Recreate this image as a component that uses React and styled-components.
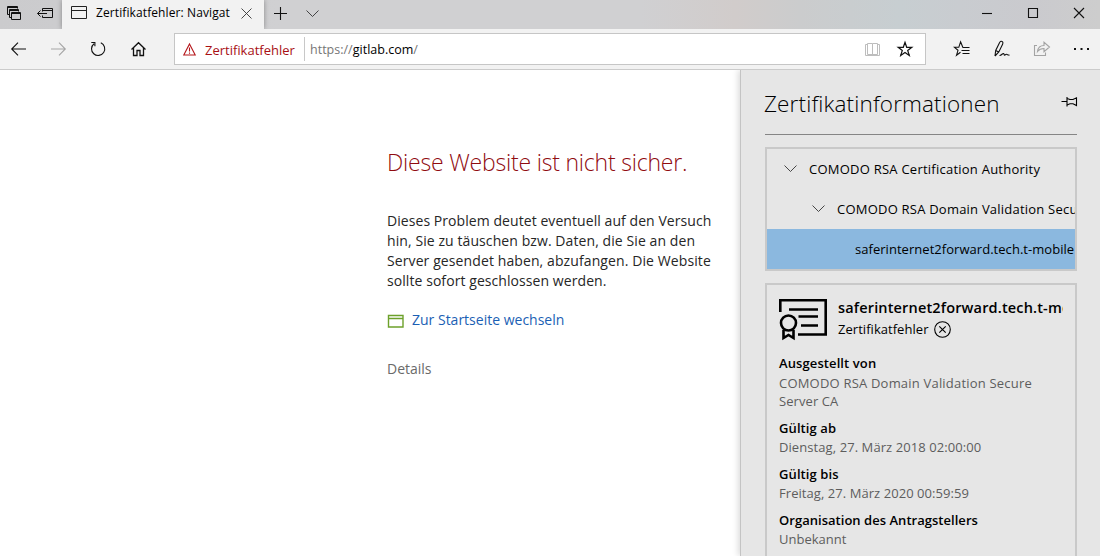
import React from "react";
import styled, { createGlobalStyle } from "styled-components";

const Global = createGlobalStyle`
  * { box-sizing: border-box; }
  html, body { margin: 0; height: 100%; overflow: hidden; }
  body { font-family: "Open Sans", "Noto Sans", sans-serif; font-size: 13px; color: #000; background: #fff; }
  h1, h2, p, dl, dt, dd { margin: 0; font-weight: 400; }
`;

const Window = styled.div`
  display: flex;
  flex-direction: column;
  width: 1100px;
  height: 556px;
  overflow: hidden;
`;

const TitleBar = styled.header`
  display: flex;
  height: 29px;
  background: linear-gradient(90deg, #cbcbcd 0, #d0d0d2 280px, #d0d0d2 640px, #d1cccb 735px, #cbcccd 800px, #c7ced1 900px, #c9ccd0 960px, #cacace 1030px, #cdcdcd 1100px);
`;

const Slot = styled.span`
  display: flex;
  flex: none;
  align-items: center;
  justify-content: center;
  width: ${(p) => p.$w}px;
  height: 100%;
  padding-bottom: ${(p) => p.$lift || 0}px;
  padding-left: ${(p) => p.$shift || 0}px;
  color: ${(p) => p.$color || "#111"};
`;

const Spacer = styled.span`
  flex: 1;
`;

const Icon = styled.svg`
  display: block;
  flex: none;
  margin-top: ${(p) => p.$top || 0}px;
  overflow: visible;
  fill: none;
  stroke: currentColor;
  stroke-width: ${(p) => p.$stroke || 1.1};
`;

const Tab = styled.div`
  display: flex;
  align-items: center;
  flex: none;
  width: 202px;
  padding: 0 12px 3px 9px;
  background: #f2f2f2;
  box-shadow: 0 0 5px rgba(0, 0, 0, 0.35);
  clip-path: inset(0 -6px 0 -6px);
`;

const TabTitle = styled.span`
  width: 145px;
  margin-left: 9px;
  font-size: 12px;
  line-height: 20px;
  letter-spacing: ${(p) => p.$ls}px;
  white-space: nowrap;
`;

const Toolbar = styled.nav`
  display: flex;
  align-items: center;
  flex: none;
  height: 41px;
  background: #f2f2f2;
  border-bottom: 1px solid #cbcbcb;
`;

const AddressBar = styled.div`
  display: flex;
  align-items: center;
  width: 752px;
  height: 32px;
  margin: 0 16px 0 15px;
  padding: 0 4px 0 8px;
  background: #fff;
  border: 1px solid #c6c6c6;
`;

const CertWarning = styled.span`
  width: 99px;
  margin-left: 9px;
  color: #a80f14;
  font-size: 13px;
  line-height: 20px;
  padding-top: 2px;
  letter-spacing: ${(p) => p.$ls}px;
  white-space: nowrap;
`;

const Divider = styled.span`
  width: 1px;
  height: 24px;
  margin-right: 5px;
  background: #c8c8c8;
`;

const Url = styled.span`
  color: #767676;
  font-size: 12.5px;
  line-height: 22px;
  padding-top: 1px;
  letter-spacing: ${(p) => p.$ls}px;
  b { color: #000; font-weight: 400; }
`;

const Content = styled.div`
  display: flex;
  flex: 1;
  min-height: 0;
`;

const Page = styled.main`
  flex: 1;
  padding: 76px 0 0 387px;
  white-space: nowrap;
`;

const Heading = styled.h1`
  && { font-weight: 340; }
  color: #900b10;
  font-size: 23px;
  line-height: 32px;
  letter-spacing: ${(p) => p.$ls}px;
`;

const Message = styled.p`
  margin-top: 33px;
  color: #262626;
  font-size: 14px;
  line-height: 20px;
`;

const Line = styled.span`
  display: block;
  letter-spacing: ${(p) => p.$ls}px;
`;

const HomeLink = styled.div`
  display: flex;
  align-items: center;
  gap: 8px;
  height: 20px;
  margin-top: 19px;
  color: #1b5fb4;
  font-size: 14px;
  line-height: 20px;
`;

const Details = styled.div`
  margin-top: 29px;
  color: #6a6a6a;
  font-size: 14px;
  line-height: 20px;
`;

const Panel = styled.aside`
  flex: none;
  width: 360px;
  padding: 0 23px 0 24px;
  background: #e6e6e6;
  border-left: 1px solid #c4c4c4;
  box-shadow: -2px 0 6px rgba(0, 0, 0, 0.14);
  clip-path: inset(0 0 0 -10px);
`;

const PanelHeader = styled.div`
  display: flex;
  justify-content: space-between;
  height: 65px;
  padding-top: 18px;
  border-bottom: 1px solid #858585;
`;

const PanelTitle = styled.h2`
  && { font-weight: 340; }
  margin-left: -1px;
  font-size: 22.5px;
  line-height: 32px;
  letter-spacing: ${(p) => p.$ls}px;
`;

const Tree = styled.div`
  height: 124px;
  margin-top: 12px;
  border: 2px solid #c9c9c9;
`;

const TreeRow = styled.div`
  display: flex;
  align-items: center;
  gap: 12px;
  height: 40px;
  padding-left: ${(p) => p.$indent}px;
  overflow: hidden;
  background: ${(p) => (p.$selected ? "#8bb8df" : "transparent")};
  font-size: 13px;
  white-space: nowrap;
  letter-spacing: ${(p) => p.$ls}px;
`;

const Card = styled.section`
  height: 300px;
  margin-top: 12px;
  padding: 13px 12px 0 12px;
  border: 2px solid #c9c9c9;
`;

const CardHead = styled.div`
  display: flex;
  gap: 10px;
  height: 55px;
`;

const CardText = styled.div`
  flex: 1;
  min-width: 0;
  white-space: nowrap;
`;

const Subject = styled.div`
  overflow: hidden;
  font-size: 14.5px;
  font-weight: 600;
  line-height: 20px;
  letter-spacing: ${(p) => p.$ls}px;
`;

const Status = styled.div`
  display: flex;
  align-items: center;
  gap: 5px;
  height: 22px;
  font-size: 13px;
  letter-spacing: ${(p) => p.$ls}px;
`;

const Field = styled.dl`
  margin-bottom: 8px;
  white-space: nowrap;

  &:first-of-type dt { line-height: 21px; }
`;

const Label = styled.dt`
  && { font-weight: 600; }
  font-size: 13px;
  line-height: 20px;
  letter-spacing: ${(p) => p.$ls}px;
`;

const Value = styled.dd`
  color: #5d5d5d;
  font-size: 13px;
  line-height: 18px;
  letter-spacing: ${(p) => p.$ls}px;
`;

const Chevron = () => (
  <Icon width="13" height="8" viewBox="0 0 13 8" color="#333" $stroke={0.9}><path d="M.5 .5 6.500 6.500 12.500 .5" /></Icon>
);

const fields = [
  { label: "Ausgestellt von", ls: 0.1, values: [["COMODO RSA Domain Validation Secure", 0.2], ["Server CA", 0.08]] },
  { label: "Gültig ab", ls: 0.1, values: [["Dienstag, 27. März 2018 02:00:00", 0.08]] },
  { label: "Gültig bis", ls: 0.1, values: [["Freitag, 27. März 2020 00:59:59", 0.06]] },
  { label: "Organisation des Antragstellers", ls: 0.03, values: [["Unbekannt", 0]] },
];

export default function App() {
  return (
    <Window>
      <Global />
      <TitleBar>
        <Slot $w={28} $lift={3}>
          <Icon width="14" height="14" viewBox="0 0 14 14" $stroke={1}>
            <path d="M2.500 8.500H.5V.5h10v2M.5 1.500h10M4.500 11.500H2.500v-8h9v2M2.500 4.500h9M4.500 6.500h9v7h-9zM4.500 7.500h9" />
          </Icon>
        </Slot>
        <Slot $w={34} $lift={3}>
          <Icon width="16" height="10" viewBox="0 0 16 10" $stroke={1}>
            <path d="M5.500 3.500v-3h10v9h-10v-2M5.500 2.500h10M.5 5.500h9.500M3.500 2.500l-3 3 3 3" />
          </Icon>
        </Slot>
        <Tab>
          <Icon width="16" height="14" viewBox="0 0 16 14" color="#222" $stroke={1}><path d="M.5 .5h15v12H.5zM.5 4.500h15" /></Icon>
          <TabTitle $ls={0.1}>Zertifikatfehler: Navigat</TabTitle>
          <Icon width="11" height="11" viewBox="0 0 11 11" color="#333" $stroke={0.9}><path d="M.5 .5l10 10M10.500 .5l-10 10" /></Icon>
        </Tab>
        <Slot $w={33} $lift={2}>
          <Icon width="13" height="13" viewBox="0 0 13 13"><path d="M6.500 0v13M0 6.500h13" /></Icon>
        </Slot>
        <Slot $w={31} $lift={2}><Chevron /></Slot>
        <Spacer />
        <Slot $w={46} $lift={3}><Icon width="10" height="10" viewBox="0 0 10 10"><path d="M0 5.500h10" /></Icon></Slot>
        <Slot $w={46} $lift={3}><Icon width="10" height="10" viewBox="0 0 10 10"><path d="M.5 .5h9v9h-9z" /></Icon></Slot>
        <Slot $w={44} $lift={3}><Icon width="10" height="10" viewBox="-1 0 10 10"><path d="M0 0l10 10M10 0L0 10" /></Icon></Slot>
      </TitleBar>

      <Toolbar>
        <Slot $w={37}><Icon width="15" height="14" viewBox="0 0 15 14"><path d="M.7 7h14.300M7 .7.700 7 7 13.300" /></Icon></Slot>
        <Slot $w={43} $color="#a5a5a5"><Icon width="15" height="14" viewBox="0 0 15 14"><path d="M0 7h14.300M8 .7 14.300 7 8 13.300" /></Icon></Slot>
        <Slot $w={36}>
          <Icon width="16" height="16" viewBox="0 0 16 16"><path d="M10.800 1.800A6.600 6.600 0 1 1 4 2.700M1.300 1.500h3.600v3.800" /></Icon>
        </Slot>
        <Slot $w={43} $shift={1}><Icon width="15" height="14" viewBox="0 0 15 14" $stroke={1.3}><path d="M.5 7.500 7.500 .7l7 6.800M2.500 6v7.500h3.500V8.500h3v5h3.500V6" /></Icon></Slot>
        <AddressBar>
          <Icon width="13" height="13" viewBox="0 0 13 13" color="#b5161b"><path d="M6.500 1 12.200 12H.8zM6.500 4.500v4M6.500 9.500v1.300" /></Icon>
          <CertWarning $ls={0}>Zertifikatfehler</CertWarning>
          <Divider />
          <Url $ls={0.01}>https://<b>gitlab.com</b>/</Url>
          <Spacer />
          <Slot $w={32} $color="#bdbdbd">
            <Icon width="16" height="14" viewBox="0 0 16 14" $stroke={1}><path d="M7.500 12.500v-11h-5v11h10v-11h-5M2.500 2.500h-2v11h14v-11h-2" /></Icon>
          </Slot>
          <Slot $w={32}>
            <Icon width="16" height="16" viewBox="0 0 16 16" $stroke={1.2}><path d="M8 1.300l1.700 5h5.100l-4.100 3.100 1.600 5L8 11.400l-4.300 3 1.600-5L1.200 6.300h5.100z" /></Icon>
          </Slot>
        </AddressBar>
        <Slot $w={40}>
          <Icon width="16" height="16" viewBox="0 0 16 16"><path d="M8.800 6.300 6.600 .8 4.800 6.300H.5l3.500 3-1.500 5 4-3M8.500 6.500H15.500M7.500 9.500h8M8.500 12.500H15.500" /></Icon>
        </Slot>
        <Slot $w={40}>
          <Icon width="16" height="16" viewBox="0 0 16 16"><path d="M1 15 1.700 9.500 5.500 1.700Q7 -.8 8.600 .9 9.300 1.700 8.600 3.200L4.800 11 1 15M1.700 9.500l3.100 1.500M5.500 14.500c2 .3 3-2.500 4-2s.3 2 1.500 1.500 1.500-1.500 2.500-.3l2 .6" /></Icon>
        </Slot>
        <Slot $w={40} $color="#a3a3a3">
          <Icon width="16" height="14" viewBox="0 0 16 14"><path d="M3 3.500H.5v10h11v-3M3.500 9.500C4 5.500 6.500 3.500 10 3.500V.3L15.500 5 10 9.700V6.500C7 6.500 5 7.500 3.500 9.500z" /></Icon>
        </Slot>
        <Slot $w={38}>
          <Icon width="16" height="4" viewBox="0 0 16 4" $stroke={2}><path d="M1 2h2M7.500 2h2M14 2h2" /></Icon>
        </Slot>
      </Toolbar>

      <Content>
        <Page>
          <Heading $ls={-0.2}>Diese Website ist nicht sicher.</Heading>
          <Message>
            <Line $ls={0.065}>Dieses Problem deutet eventuell auf den Versuch</Line>
            <Line $ls={0.085}>hin, Sie zu täuschen bzw. Daten, die Sie an den</Line>
            <Line $ls={0.1}>Server gesendet haben, abzufangen. Die Website</Line>
            <Line $ls={0.07}>sollte sofort geschlossen werden.</Line>
          </Message>
          <HomeLink>
            <Icon width="17" height="13" viewBox="0 -.5 17 13" color="#6da12b" $stroke={1.4}><path d="M1.500 1h14.500v11.500h-14.500zM1.500 4h14.500" /></Icon>
            <span>Zur Startseite wechseln</span>
          </HomeLink>
          <Details>Details</Details>
        </Page>

        <Panel>
          <PanelHeader>
            <PanelTitle $ls={0.14}>Zertifikatinformationen</PanelTitle>
            <Icon width="16" height="10" viewBox="0 0 16 10" $top={9}>
              <path d="M.5 4.500h5M6 0v9.500M6 1.500 9 2.500h3L15.500 .8v7.700L12 6.800H9L6 8" />
            </Icon>
          </PanelHeader>
          <Tree>
            <TreeRow $indent={17} $ls={0.24}><Chevron /><span>COMODO RSA Certification Authority</span></TreeRow>
            <TreeRow $indent={45} $ls={0.22}><Chevron /><span>COMODO RSA Domain Validation Secure Server CA</span></TreeRow>
            <TreeRow $indent={88} $ls={0.04} $selected><span>saferinternet2forward.tech.t-mobile</span></TreeRow>
          </Tree>
          <Card>
            <CardHead>
              <Icon width="49" height="42" viewBox="0 0 49 42" color="#000" $stroke={2.6} $top={1}>
                <path d="M1.300 13V1.300h45.400v34.200H19M10 10.500h29M19.500 17.500H39M22 26.500h17" />
                <circle cx="9.500" cy="24" r="7.500" />
                <path d="M4.500 31v8l5-3 5 3v-8" />
              </Icon>
              <CardText>
                <Subject $ls={0.16}>saferinternet2forward.tech.t-mobile</Subject>
                <Status $ls={0.04}>
                  <span>Zertifikatfehler</span>
                  <Icon width="17" height="17" viewBox="0 0 17 17"><circle cx="8.500" cy="8.500" r="7.800" /><path d="M5.300 5.300l6.400 6.400M11.700 5.300l-6.400 6.400" /></Icon>
                </Status>
              </CardText>
            </CardHead>
            {fields.map((f) => (
              <Field key={f.label}>
                <Label $ls={f.ls}>{f.label}</Label>
                {f.values.map(([text, ls]) => <Value key={text} $ls={ls}>{text}</Value>)}
              </Field>
            ))}
          </Card>
        </Panel>
      </Content>
    </Window>
  );
}
